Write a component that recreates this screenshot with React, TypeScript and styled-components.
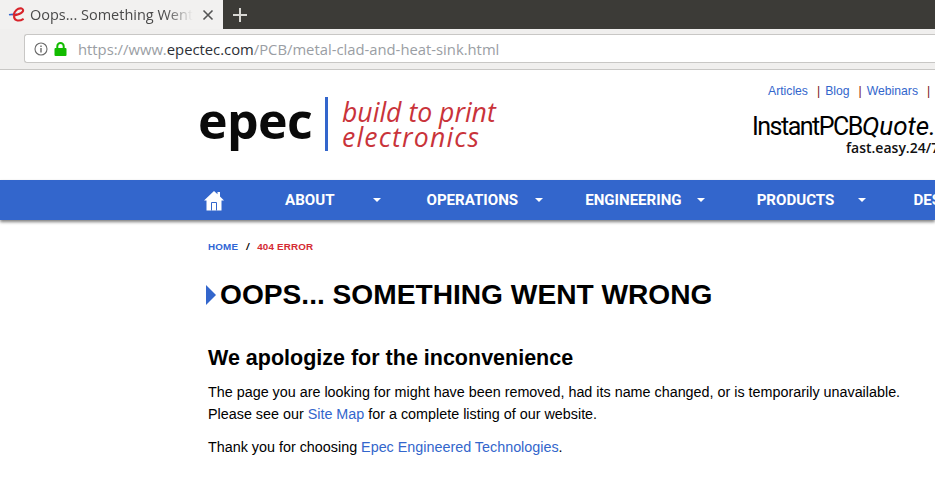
import React from "react";
import styled, { createGlobalStyle } from "styled-components";

const GlobalStyle = createGlobalStyle`
  html, body {
    margin: 0;
    padding: 0;
    width: 935px;
    height: 499px;
    overflow: hidden;
    background: #fff;
    font-family: "Liberation Sans", Arial, sans-serif;
  }
`;

const TabStrip = styled.div`
  display: flex;
  height: 29px;
  background: #3c3b37;
`;

const Tab = styled.div`
  display: flex;
  align-items: center;
  width: 223px;
  height: 29px;
  padding-left: 8px;
  box-sizing: border-box;
  background: #f2f1f0;
`;

const TabTitle = styled.span`
  width: 166px;
  margin: 0 6px 0 4px;
  overflow: hidden;
  white-space: nowrap;
  font-family: "Open Sans", sans-serif;
  font-size: 14.5px;
  color: #4a4a4a;
  -webkit-mask-image: linear-gradient(to right, #000 82%, transparent 98%);
  mask-image: linear-gradient(to right, #000 82%, transparent 98%);
`;

const NewTab = styled.div`
  display: flex;
  align-items: center;
  justify-content: center;
  width: 34px;
  height: 29px;
`;

const Toolbar = styled.div`
  height: 41px;
  padding: 5px 0 0 24px;
  box-sizing: border-box;
  background: #f0efee;
  border-bottom: 1px solid #c8c7c5;
`;

const AddressBar = styled.div`
  display: flex;
  align-items: center;
  height: 29px;
  box-sizing: border-box;
  padding-left: 9px;
  background: #fff;
  border: 1px solid #c8c7c5;
  border-right: none;
  border-radius: 3px 0 0 3px;
  gap: 6px;
`;

const Url = styled.span`
  margin-left: 5px;
  font-family: "Open Sans", sans-serif;
  font-size: 14.8px;
  color: #9a9ea4;
  white-space: nowrap;
`;

const UrlHost = styled.span`
  color: #2d3036;
`;

const Header = styled.header`
  display: flex;
  height: 110px;
  padding-left: 198px;
  box-sizing: border-box;
`;

const Logo = styled.div`
  display: flex;
  align-items: flex-start;
  width: 522px;
  padding-top: 27px;
  flex-shrink: 0;
`;

const LogoWord = styled.div`
  width: 127px;
  font-family: "Open Sans", sans-serif;
  font-weight: 700;
  font-size: 50px;
  line-height: 47px;
  letter-spacing: -0.6px;
  color: #0a0a0a;
`;

const LogoBar = styled.div`
  width: 3px;
  height: 54px;
  background: #3366cc;
  margin-right: 14px;
`;

const Tagline = styled.div`
  margin-top: 3px;
  font-family: "Open Sans", sans-serif;
  font-style: italic;
  font-size: 26.6px;
  line-height: 25px;
  color: #c9333a;
`;

const TaglineLine = styled.div<{ $spacing: number }>`
  letter-spacing: ${(p) => p.$spacing}px;
  white-space: nowrap;
`;

const HeaderRight = styled.div`
  display: flex;
  flex-direction: column;
  flex-shrink: 0;
  padding-top: 14px;
`;

const TopLinks = styled.div`
  display: flex;
  margin-left: 48px;
  font-size: 12.2px;
  line-height: 14px;
  white-space: nowrap;
`;

const TopLink = styled.a`
  color: #3366cc;
  margin-right: 9px;
`;

const Pipe = styled.span`
  color: #7a1020;
  margin-right: 5px;
`;

const Quote = styled.div`
  margin-top: 15px;
  margin-left: 32px;
  font-family: "Roboto", sans-serif;
  font-size: 25px;
  line-height: 26px;
  letter-spacing: -1.5px;
  color: #000;
  white-space: nowrap;
`;

const QuoteItalic = styled.em`
  font-style: italic;
  letter-spacing: 0;
  font-size: 26px;
`;

const QuoteSub = styled.div`
  margin: 1px 0 0 126px;
  font-family: "Open Sans", sans-serif;
  font-weight: 600;
  font-size: 14px;
  line-height: 14px;
  color: #111;
  white-space: nowrap;
`;

const Nav = styled.nav`
  display: flex;
  align-items: center;
  height: 40px;
  padding-left: 204px;
  background: #3366cc;
  box-shadow: 0 2px 3px rgba(0, 0, 0, 0.5);
  white-space: nowrap;
  overflow: hidden;
`;

const HomeLink = styled.a`
  display: flex;
  width: 81px;
  flex-shrink: 0;
`;

const NavItem = styled.a<{ $caretGap: number; $after: number }>`
  display: flex;
  align-items: center;
  flex-shrink: 0;
  font-family: "Roboto", sans-serif;
  font-weight: 700;
  font-size: 15.1px;
  color: #fff;

  &::after {
    content: "";
    margin-left: ${(p) => p.$caretGap}px;
    margin-right: ${(p) => p.$after}px;
    border-left: 4px solid transparent;
    border-right: 4px solid transparent;
    border-top: 4px solid #fff;
  }
`;

const Main = styled.main`
  padding: 19px 0 0 208px;
  width: 720px;
`;

const Crumbs = styled.div`
  display: flex;
  align-items: center;
  height: 15px;
  font-size: 9.8px;
  font-weight: 700;
  text-transform: uppercase;
  letter-spacing: 0.2px;
`;

const CrumbHome = styled.a`
  color: #2f66d6;
`;

const CrumbSep = styled.span`
  margin: 0 8px;
  color: #000;
  font-style: italic;
`;

const CrumbCurrent = styled.span`
  color: #d42b33;
`;

const Title = styled.h1`
  position: relative;
  margin: 23px 0 0 12px;
  font-size: 28.15px;
  line-height: 36px;
  font-weight: 700;
  color: #000;
  white-space: nowrap;

  &::before {
    content: "";
    position: absolute;
    left: -14px;
    top: 8px;
    border-left: 10px solid #3366cc;
    border-top: 10px solid transparent;
    border-bottom: 10px solid transparent;
  }
`;

const Subtitle = styled.h2`
  margin: 31px 0 0;
  font-size: 21.5px;
  line-height: 28px;
  font-weight: 700;
  color: #000;
`;

const Copy = styled.p`
  margin: 9px 0 0;
  font-size: 14.35px;
  line-height: 22px;
  color: #000;
  white-space: nowrap;

  & + & {
    margin-top: 11px;
  }

  a {
    color: #3366cc;
  }
`;

function App() {
  return (
    <>
      <GlobalStyle />
      <TabStrip>
        <Tab>
          <svg width="18" height="18" viewBox="0 0 18 18">
            <path d="M1 8.8 C3.5 8 6 8.6 9 8.2" stroke="#3366cc" strokeWidth="1.6" fill="none" />
            <path
              d="M5.6 9.6 C6 5 10 1.5 13.8 2.6 C17 4 14.5 8.2 6.2 9.4 C5.4 13.8 9.8 16.4 15.6 12.8"
              stroke="#d8232a"
              strokeWidth="2.1"
              fill="none"
            />
          </svg>
          <TabTitle>Oops... Something Went Wrong</TabTitle>
          <svg width="12" height="12" viewBox="0 0 12 12">
            <path d="M1.5 1.5 L10.5 10.5 M10.5 1.5 L1.5 10.5" stroke="#555" strokeWidth="1.6" />
          </svg>
        </Tab>
        <NewTab>
          <svg width="14" height="14" viewBox="0 0 14 14">
            <path d="M7 0 V14 M0 7 H14" stroke="#d8d7d3" strokeWidth="2" />
          </svg>
        </NewTab>
      </TabStrip>
      <Toolbar>
        <AddressBar>
          <svg width="14" height="14" viewBox="0 0 14 14">
            <circle cx="7" cy="7" r="6" stroke="#6a6a6a" strokeWidth="1.1" fill="none" />
            <path d="M7 6 V10.5 M7 3.4 V5" stroke="#6a6a6a" strokeWidth="1.4" />
          </svg>
          <svg width="13" height="14" viewBox="0 0 13 14">
            <path d="M3.3 6 V4.2 a3.2 3.2 0 0 1 6.4 0 V6" stroke="#12bc00" strokeWidth="2" fill="none" />
            <rect x="0.5" y="6" width="12" height="8" rx="1" fill="#12bc00" />
          </svg>
          <Url>
            https://www.<UrlHost>epectec.com</UrlHost>/PCB/metal-clad-and-heat-sink.html
          </Url>
        </AddressBar>
      </Toolbar>
      <Header>
        <Logo>
          <LogoWord>epec</LogoWord>
          <LogoBar />
          <Tagline>
            <TaglineLine $spacing={0}>build to print</TaglineLine>
            <TaglineLine $spacing={1.2}>electronics</TaglineLine>
          </Tagline>
        </Logo>
        <HeaderRight>
          <TopLinks>
            <TopLink>Articles</TopLink>
            <Pipe>|</Pipe>
            <TopLink>Blog</TopLink>
            <Pipe>|</Pipe>
            <TopLink>Webinars</TopLink>
            <Pipe>|</Pipe>
          </TopLinks>
          <Quote>
            InstantPCB<QuoteItalic>Quote.</QuoteItalic>
          </Quote>
          <QuoteSub>fast.easy.24/7</QuoteSub>
        </HeaderRight>
      </Header>
      <Nav>
        <HomeLink>
          <svg width="20" height="21" viewBox="0 0 20 21">
            <path fill="#fff" d="M10 1 L13.5 4.2 V2 H16 V6.5 L20 10.4 H17.5 V20.5 H2.5 V10.4 H0 Z" />
            <path d="M7.5 20.5 V12.5 H12.5 V20.5" fill="none" stroke="#3366cc" strokeWidth="1" />
          </svg>
        </HomeLink>
        <NavItem $caretGap={39} $after={45}>ABOUT</NavItem>
        <NavItem $caretGap={17} $after={42}>OPERATIONS</NavItem>
        <NavItem $caretGap={15} $after={52}>ENGINEERING</NavItem>
        <NavItem $caretGap={24} $after={47}>PRODUCTS</NavItem>
        <NavItem $caretGap={20} $after={40}>DESIGN</NavItem>
      </Nav>
      <Main>
        <Crumbs>
          <CrumbHome>Home</CrumbHome>
          <CrumbSep>/</CrumbSep>
          <CrumbCurrent>404 Error</CrumbCurrent>
        </Crumbs>
        <Title>OOPS... SOMETHING WENT WRONG</Title>
        <Subtitle>We apologize for the inconvenience</Subtitle>
        <Copy>
          The page you are looking for might have been removed, had its name changed, or is temporarily unavailable.
          <br />
          Please see our <a>Site Map</a> for a complete listing of our website.
        </Copy>
        <Copy>
          Thank you for choosing <a>Epec Engineered Technologies</a>.
        </Copy>
      </Main>
    </>
  );
}

export default App;
